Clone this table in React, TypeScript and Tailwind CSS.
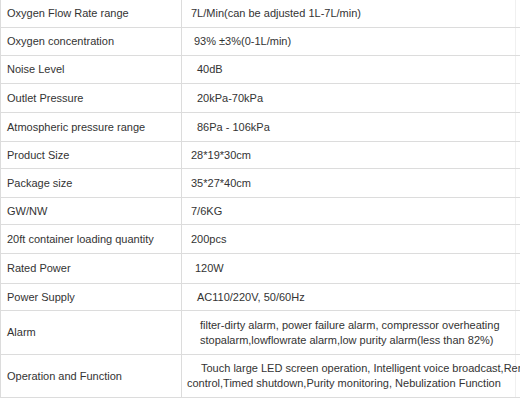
const rows: { label: string; value: string; h: string; pl: string }[] = [
  { label: "Oxygen Flow Rate range", value: "7L/Min(can be adjusted 1L-7L/min)", h: "h-[28px]", pl: "pl-[9px]" },
  { label: "Oxygen concentration", value: "93% ±3%(0-1L/min)", h: "h-[28px]", pl: "pl-[12px]" },
  { label: "Noise Level", value: "40dB", h: "h-[28px]", pl: "pl-[15px]" },
  { label: "Outlet Pressure", value: "20kPa-70kPa", h: "h-[29px]", pl: "pl-[15px]" },
  { label: "Atmospheric pressure range", value: "86Pa - 106kPa", h: "h-[29px]", pl: "pl-[15px]" },
  { label: "Product Size", value: "28*19*30cm", h: "h-[27px]", pl: "pl-[9px]" },
  { label: "Package size", value: "35*27*40cm", h: "h-[29px]", pl: "pl-[9px]" },
  { label: "GW/NW", value: "7/6KG", h: "h-[27px]", pl: "pl-[9px]" },
  { label: "20ft container loading quantity", value: "200pcs", h: "h-[29px]", pl: "pl-[9px]" },
  { label: "Rated Power", value: "120W", h: "h-[30px]", pl: "pl-[13px]" },
  { label: "Power Supply", value: "AC110/220V, 50/60Hz", h: "h-[27px]", pl: "pl-[15px]" },
];

function Row({ label, h, children }: { label: string; h: string; children: React.ReactNode }) {
  return (
    <div className={`flex ${h} border-b border-[#dcdcdc]`}>
      <div className="flex w-[182px] shrink-0 items-center border-x border-[#dcdcdc] pl-[6px]">{label}</div>
      <div className="flex w-[334px] shrink-0 items-center border-r border-[#f0f0f0]">{children}</div>
    </div>
  );
}

export default function App() {
  return (
    <div className="h-[400px] w-[520px] overflow-hidden bg-white text-[11px] text-[#333] [font-family:'Liberation_Sans',Arial,sans-serif]">
      {rows.map((r) => (
        <Row key={r.label} label={r.label} h={r.h}>
          <span className={`${r.pl} whitespace-nowrap`}>{r.value}</span>
        </Row>
      ))}
      <Row label="Alarm" h="h-[44px]">
        <div className="pl-[18px] leading-[15px] whitespace-nowrap">
          <div>filter-dirty alarm, power failure alarm, compressor overheating</div>
          <div>stopalarm,lowflowrate alarm,low purity alarm(less than 82%)</div>
        </div>
      </Row>
      <Row label="Operation and Function" h="h-[43px]">
        <div className="pl-[5px] leading-[15px] whitespace-nowrap">
          <div className="pl-[14px]">Touch large LED screen operation, Intelligent voice broadcast,Remote</div>
          <div>control,Timed shutdown,Purity monitoring, Nebulization Function</div>
        </div>
      </Row>
    </div>
  );
}
